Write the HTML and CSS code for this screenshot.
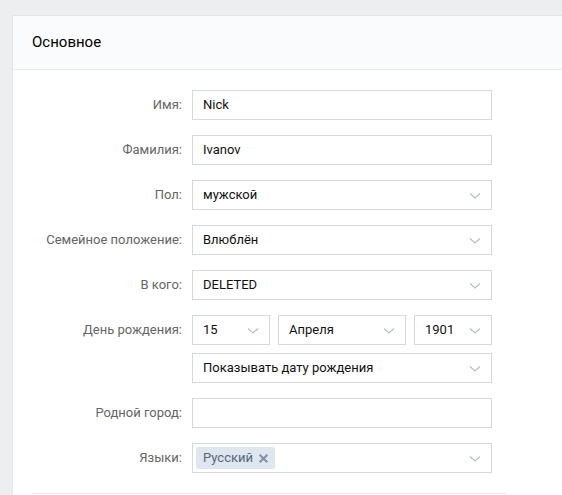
FILE: index.html
```html
<!DOCTYPE html>
<html lang="ru">
<head>
<meta charset="utf-8">
<link rel="stylesheet" href="styles.css">
</head>
<body>
<div class="card">
  <div class="card-head">Основное</div>
  <div class="form">
    <div class="row">
      <div class="label">Имя:</div>
      <div class="field"><div class="input">Nick</div></div>
    </div>
    <div class="row">
      <div class="label">Фамилия:</div>
      <div class="field"><div class="input">Ivanov</div></div>
    </div>
    <div class="row">
      <div class="label">Пол:</div>
      <div class="field"><div class="input select">мужской<svg class="chev" viewBox="0 0 12 8"><path d="M1 1.5 L6 6 L11 1.5"/></svg></div></div>
    </div>
    <div class="row">
      <div class="label">Семейное положение:</div>
      <div class="field"><div class="input select">Влюблён<svg class="chev" viewBox="0 0 12 8"><path d="M1 1.5 L6 6 L11 1.5"/></svg></div></div>
    </div>
    <div class="row">
      <div class="label">В кого:</div>
      <div class="field"><div class="input select">DELETED<svg class="chev" viewBox="0 0 12 8"><path d="M1 1.5 L6 6 L11 1.5"/></svg></div></div>
    </div>
    <div class="row">
      <div class="label">День рождения:</div>
      <div class="field">
        <div class="date">
          <div class="input select day">15<svg class="chev" viewBox="0 0 12 8"><path d="M1 1.5 L6 6 L11 1.5"/></svg></div>
          <div class="input select month">Апреля<svg class="chev" viewBox="0 0 12 8"><path d="M1 1.5 L6 6 L11 1.5"/></svg></div>
          <div class="input select year">1901<svg class="chev" viewBox="0 0 12 8"><path d="M1 1.5 L6 6 L11 1.5"/></svg></div>
        </div>
        <div class="input select">Показывать дату рождения<svg class="chev" viewBox="0 0 12 8"><path d="M1 1.5 L6 6 L11 1.5"/></svg></div>
      </div>
    </div>
    <div class="row">
      <div class="label">Родной город:</div>
      <div class="field"><div class="input"></div></div>
    </div>
    <div class="row">
      <div class="label">Языки:</div>
      <div class="field"><div class="input select tags"><span class="tag">Русский<svg class="x" viewBox="0 0 10 10"><path d="M1.5 1.5 L8.5 8.5 M8.5 1.5 L1.5 8.5"/></svg></span><svg class="chev" viewBox="0 0 12 8"><path d="M1 1.5 L6 6 L11 1.5"/></svg></div></div>
    </div>
    <div class="sep"></div>
  </div>
</div>
</body>
</html>
```
FILE: styles.css
```css
html, body {
  margin: 0;
  padding: 0;
  background: #edeef0;
  font-family: Roboto, "Open Sans", "Liberation Sans", sans-serif;
  font-size: 13px;
  color: #000;
}
.card {
  margin: 15px 0 0 12px;
  background: #fff;
  border-left: 1px solid #e3e4e8;
  border-top: 1px solid #e3e4e8;
  height: 480px;
  overflow: hidden;
}
.card-head {
  height: 53px;
  line-height: 53px;
  padding-left: 19px;
  font-size: 15px;
  background: #fafbfc;
  border-bottom: 1px solid #e7e8ec;
  color: #000;
}
.form {
  padding-top: 20px;
}
.row {
  display: flex;
  gap: 10px;
  margin-bottom: 15px;
}
.label {
  width: 169px;
  text-align: right;
  color: #656565;
  line-height: 30px;
  flex: none;
}
.field {
  display: flex;
  flex-direction: column;
  gap: 8px;
  width: 300px;
}
.input {
  box-sizing: border-box;
  height: 30px;
  border: 1px solid #d3d9de;
  padding: 0 10px;
  line-height: 28px;
  display: flex;
  align-items: center;
  position: relative;
  background: #fff;
  color: #111;
}
.chev {
  position: absolute;
  right: 10px;
  top: 11px;
  width: 12px;
  height: 8px;
  fill: none;
  stroke: #b5bcc4;
  stroke-width: 1.1;
}
.date {
  display: flex;
  gap: 8px;
}
.day, .year { width: 78px; }
.month { width: 128px; }
.tags { padding-left: 3px; }
.tag {
  display: inline-flex;
  align-items: center;
  height: 22px;
  line-height: 22px;
  padding: 0 6px 0 7px;
  background: #dfe6ee;
  color: #55677d;
  border-radius: 2px;
  gap: 5px;
}
.x {
  width: 11px;
  height: 11px;
  fill: none;
  stroke: #7f93aa;
  stroke-width: 1.9;
}
.sep {
  margin: 20px 0 0 19px;
  width: 475px;
  height: 1px;
  background: #e7e8ec;
}
```
